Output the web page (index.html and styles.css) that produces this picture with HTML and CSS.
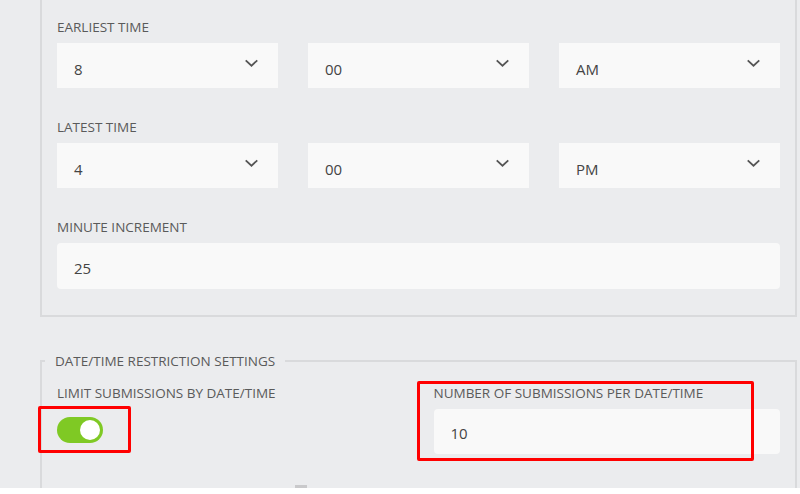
FILE: index.html
```html
<!DOCTYPE html>
<html lang="en">
<head>
<meta charset="utf-8">
<title>Date/Time settings</title>
<link rel="stylesheet" href="styles.css">
</head>
<body>
<div class="page">
  <fieldset class="panel panel-top">
    <div class="field">
      <div class="label">EARLIEST TIME</div>
      <div class="row3">
        <div class="select"><span class="val">8</span><svg class="chev" viewBox="0 0 16 9"><path d="M1.5 1.5 L8 7.5 L14.5 1.5"/></svg></div>
        <div class="select"><span class="val">00</span><svg class="chev" viewBox="0 0 16 9"><path d="M1.5 1.5 L8 7.5 L14.5 1.5"/></svg></div>
        <div class="select"><span class="val">AM</span><svg class="chev" viewBox="0 0 16 9"><path d="M1.5 1.5 L8 7.5 L14.5 1.5"/></svg></div>
      </div>
    </div>
    <div class="field">
      <div class="label">LATEST TIME</div>
      <div class="row3">
        <div class="select"><span class="val">4</span><svg class="chev" viewBox="0 0 16 9"><path d="M1.5 1.5 L8 7.5 L14.5 1.5"/></svg></div>
        <div class="select"><span class="val">00</span><svg class="chev" viewBox="0 0 16 9"><path d="M1.5 1.5 L8 7.5 L14.5 1.5"/></svg></div>
        <div class="select"><span class="val">PM</span><svg class="chev" viewBox="0 0 16 9"><path d="M1.5 1.5 L8 7.5 L14.5 1.5"/></svg></div>
      </div>
    </div>
    <div class="field last">
      <div class="label">MINUTE INCREMENT</div>
      <div class="input"><span class="val">25</span></div>
    </div>
  </fieldset>

  <fieldset class="panel panel-bottom">
    <legend class="legend">DATE/TIME RESTRICTION SETTINGS</legend>
    <div class="row2">
      <div class="col">
        <div class="label">LIMIT SUBMISSIONS BY DATE/TIME</div>
        <div class="toggle-wrap">
          <div class="toggle"><div class="knob"></div></div>
          <div class="mark mark-toggle"></div>
        </div>
      </div>
      <div class="col col-right">
        <div class="label">NUMBER OF SUBMISSIONS PER DATE/TIME</div>
        <div class="input input-short"><span class="val">10</span></div>
        <div class="mark mark-number"></div>
      </div>
    </div>
  </fieldset>
  <div class="handle"></div>
</div>
</body>
</html>
```

FILE: styles.css
```css
html, body {
  margin: 0;
  padding: 0;
}

body {
  background: #ffffff;
  font-family: "Open Sans", "Noto Sans", sans-serif;
  width: 800px;
  height: 494px;
  overflow: hidden;
}

.page {
  position: relative;
  background: #ebecee;
  height: 488px;
  overflow: hidden;
  padding: 0 3px 0 40px;
  box-sizing: border-box;
}

.panel {
  margin: 0;
  border: 2px solid #d9dadc;
  padding: 0 15px;
  min-width: 0;
}

.panel-top {
  border-top: 0;
  padding-top: 18px;
  padding-bottom: 26px;
}

.panel-bottom {
  margin-top: 35px;
  border-bottom: 0;
  padding-top: 14px;
  padding-bottom: 60px;
}

.legend {
  font-size: 13.5px;
  line-height: 18px;
  color: #5a5a5a;
  padding: 0 10px;
  margin-left: -12px;
}

.field {
  margin-bottom: 30px;
}

.field.last {
  margin-bottom: 0;
}

.label {
  font-size: 13.5px;
  line-height: 18px;
  color: #5a5a5a;
  margin-bottom: 7px;
  white-space: nowrap;
}

.row3 {
  display: grid;
  grid-template-columns: 1fr 1fr 1fr;
  column-gap: 30px;
}

.select {
  height: 45px;
  background: #f9f9f9;
  display: flex;
  align-items: center;
  justify-content: space-between;
  padding: 0 19px 0 17px;
}

.val {
  font-size: 15px;
  color: #444;
  padding-top: 7px;
}

.chev {
  width: 15px;
  height: 8px;
  margin-top: -5px;
  fill: none;
  stroke: #555;
  stroke-width: 2;
}

.input {
  height: 46px;
  background: #f9f9f9;
  border-radius: 4px;
  display: flex;
  align-items: center;
  padding: 0 17px;
}

.input .val {
  padding-top: 3px;
}

.row2 {
  display: grid;
  grid-template-columns: 1fr 1fr;
  column-gap: 30px;
}

.col {
  position: relative;
}

.col .label {
  margin-bottom: 7px;
}

.toggle-wrap {
  position: relative;
  padding-top: 8px;
}

.toggle {
  width: 46px;
  height: 26px;
  border-radius: 13px;
  background: #7fc924;
  position: relative;
}

.knob {
  position: absolute;
  right: 3px;
  top: 3px;
  width: 20px;
  height: 20px;
  border-radius: 50%;
  background: #fff;
}

.input-short {
  height: 45px;
}

.input-short .val {
  padding-top: 2px;
}

.mark {
  position: absolute;
  border: 3px solid #ff0000;
  border-radius: 2px;
  box-sizing: border-box;
}

.mark-toggle {
  left: -19px;
  top: -3px;
  width: 93px;
  height: 47px;
}

.mark-number {
  left: -17px;
  top: -3px;
  width: 337px;
  height: 80px;
}

.handle {
  position: absolute;
  left: 295px;
  bottom: 0;
  width: 12px;
  height: 3px;
  background: #c9c9cb;
}
```
